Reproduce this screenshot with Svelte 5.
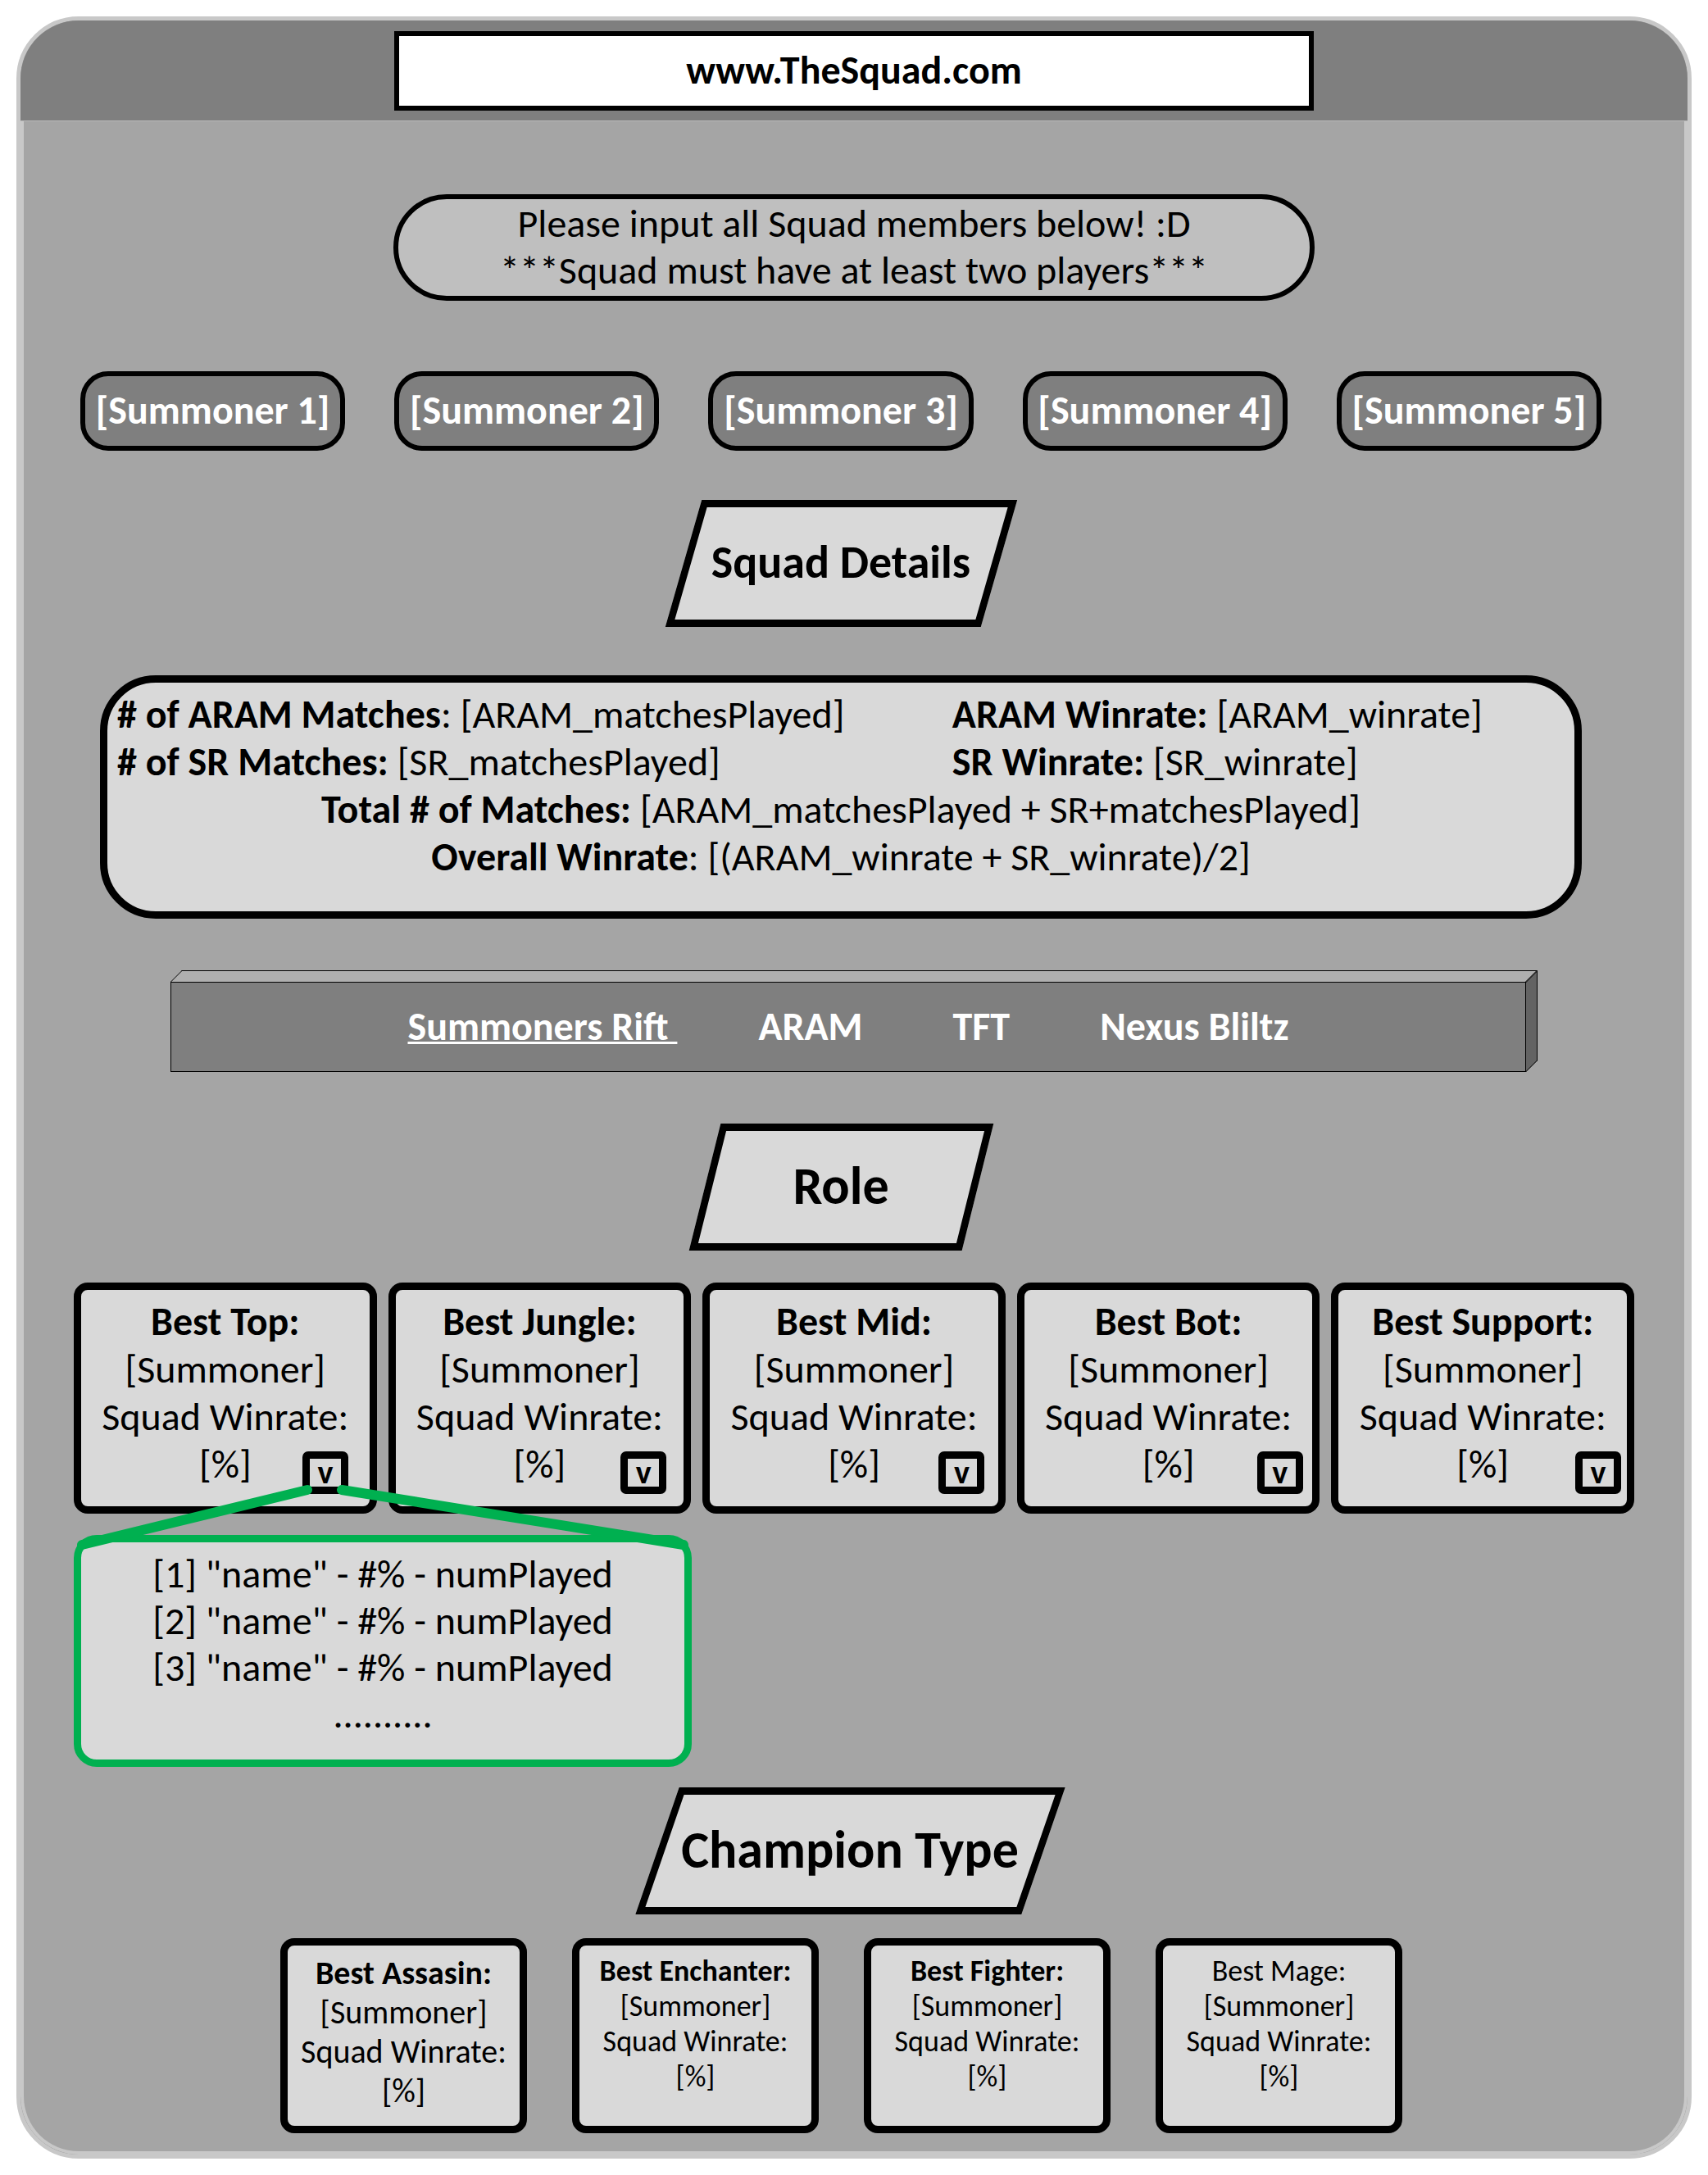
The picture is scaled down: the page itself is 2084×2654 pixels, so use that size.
<script>
  const summoners = [1, 2, 3, 4, 5];
  const modes = ['Summoners Rift\u00a0', 'ARAM', 'TFT', 'Nexus Bliltz'];
  const roles = ['Top', 'Jungle', 'Mid', 'Bot', 'Support'];
  const picks = [1, 2, 3];
  const types = [
    { name: 'Assasin', variant: 'large' },
    { name: 'Enchanter', variant: '' },
    { name: 'Fighter', variant: '' },
    { name: 'Mage', variant: 'plain' }
  ];
</script>

<div class="frame">
  <header>
    <input class="address" type="text" aria-label="Address" value="www.TheSquad.com" />
  </header>

  <main>
    <p class="notice">
      Please input all Squad members below! :D<br />***Squad must have at least two players***
    </p>

    <div class="lead">
      <form class="summoners">
        {#each summoners as n}
          <input type="text" aria-label="Summoner {n}" value="[Summoner {n}]" />
        {/each}
      </form>

      <h2 class="slab squad"><span>Squad Details</span></h2>

      <section class="details">
        <div class="pairs">
          <p><b># of ARAM Matches</b>: [ARAM_matchesPlayed]</p>
          <p><b>ARAM Winrate:</b> [ARAM_winrate]</p>
          <p><b># of SR Matches:</b> [SR_matchesPlayed]</p>
          <p><b>SR Winrate:</b> [SR_winrate]</p>
        </div>
        <p class="total"><b>Total # of Matches:</b> [ARAM_matchesPlayed + SR+matchesPlayed]</p>
        <p class="total"><b>Overall Winrate</b>: [(ARAM_winrate + SR_winrate)/2]</p>
      </section>
    </div>

    <nav class="modes">
      <div class="lid"></div>
      <div class="face">
        {#each modes as mode, i}
          <a href="#mode-{i}" class:current={i === 0}>{mode}</a>
        {/each}
      </div>
      <div class="side"></div>
    </nav>

    <div class="lead">
      <h2 class="slab role"><span>Role</span></h2>
    </div>

    <section class="roles">
      <div class="cards">
        {#each roles as role}
          <article class="card">
            <h3>Best {role}:</h3>
            <p>[Summoner]</p>
            <p>Squad Winrate:</p>
            <p>[%]</p>
          </article>
        {/each}
      </div>
      <div class="toggles">
        {#each roles as role, i}
          <button type="button" aria-label="Show best {role} list" aria-expanded={i === 0}>v</button>
        {/each}
      </div>
      <div class="dropdown">
        {#each picks as n}
          <p>[{n}] "name" - #% - numPlayed</p>
        {/each}
        <p>..........</p>
      </div>
      <svg class="callout" viewBox="0 0 754 67" preserveAspectRatio="none" aria-hidden="true">
        <path d="M285 0 L10 67 M327 0 L744 67" />
      </svg>
    </section>

    <section class="champions">
      <h2 class="slab champion"><span>Champion Type</span></h2>
      <div class="types">
        {#each types as type}
          <article class="card {type.variant}">
            <h3>Best {type.name}:</h3>
            <p>[Summoner]</p>
            <p>Squad Winrate:</p>
            <p>[%]</p>
          </article>
        {/each}
      </div>
    </section>
  </main>
</div>

<style>
  :global(body) {
    margin: 0;
    background: #fff;
  }
  .frame,
  .frame * {
    box-sizing: border-box;
  }
  .frame {
    margin: 20px;
    border: 5px solid #c8c8c8;
    border-radius: 76px;
    overflow: hidden;
    background: #a5a5a5;
    color: #000;
    font: 48px/58px Carlito, Lato, sans-serif;
  }
  p,
  h2,
  h3 {
    margin: 0;
    font-size: inherit;
  }
  input,
  button {
    font: inherit;
    margin: 0;
    min-width: 0;
  }
  header {
    display: flex;
    justify-content: center;
    padding: 13px 0 12px;
    background: #7f7f7f;
    border-bottom: 1px solid #b8b8b8;
  }
  .address {
    width: 55.2%;
    height: 97px;
    padding: 0 0 2px;
    border: 6px solid #000;
    background: #fff;
    font-weight: 700;
    text-align: center;
  }
  main {
    display: flex;
    flex-direction: column;
    padding: 89px 3% 22px;
    border: solid #c8c8c8;
    border-width: 0 4px 4px;
    border-radius: 0 0 71px 71px;
  }
  .notice {
    align-self: center;
    width: 59%;
    padding: 1px 0 3px;
    border: 6px solid #000;
    border-radius: 65px;
    background: #bfbfbf;
    line-height: 57px;
    text-align: center;
  }
  .lead {
    padding-right: 32px;
  }
  .summoners {
    display: grid;
    grid-template-columns: repeat(5, 1fr);
    gap: 60px;
    margin: 86px 8px 60px;
  }
  .summoners input {
    height: 97px;
    padding: 0 0 2px;
    border: 6px solid #000;
    border-radius: 34px;
    background: #7f7f7f;
    color: #fff;
    font-weight: 700;
    text-align: center;
  }
  .slab {
    position: relative;
    height: 155px;
    margin: 0 auto;
    padding-bottom: 4px;
    display: flex;
    align-items: center;
    justify-content: center;
    font-weight: 700;
  }
  .slab::before {
    content: '';
    position: absolute;
    inset: 0;
    border: 9px solid #000;
    background: #d9d9d9;
  }
  .slab span {
    position: relative;
  }
  .squad {
    width: 385px;
    font-size: 56px;
  }
  .squad::before {
    transform: skewX(-16deg);
  }
  .role {
    width: 333px;
    font-size: 64px;
  }
  .role::before {
    transform: skewX(-14deg);
  }
  .champion {
    width: 471px;
    font-size: 64px;
  }
  .champion::before {
    transform: skewX(-19deg);
  }
  .details {
    margin: 59px 32px 63px;
    padding: 10px 12px 37px;
    border: 9px solid #000;
    border-radius: 68px;
    background: #d9d9d9;
  }
  .pairs {
    display: grid;
    grid-template-columns: 15fr 11fr;
    white-space: nowrap;
  }
  .total {
    text-align: center;
  }
  .modes {
    display: grid;
    grid-template: 14px 110px / 1fr 14px;
    margin: 0 118px 63px;
  }
  .lid {
    grid-column: 1;
    grid-row: 1;
    border: 1px solid #000;
    border-bottom: 0;
    background: #afafaf;
    transform: skewX(-45deg);
    transform-origin: bottom;
  }
  .side {
    grid-column: 2;
    grid-row: 2;
    border: 1px solid #000;
    border-left: 0;
    background: #636363;
    transform: skewY(-45deg);
    transform-origin: left;
  }
  .face {
    grid-column: 1;
    grid-row: 2;
    display: flex;
    align-items: center;
    justify-content: center;
    gap: 110px;
    border: 1px solid #000;
    background: #7f7f7f;
    font-weight: 700;
  }
  .face a {
    color: #fff;
    text-decoration: none;
  }
  /* The underlined trailing space takes its room from the gap. */
  .face .current {
    margin-right: -11px;
    text-decoration: underline;
    text-decoration-thickness: 3px;
  }
  .roles {
    position: relative;
    margin-top: 39px;
  }
  .cards {
    display: grid;
    grid-template-columns: repeat(5, 1fr);
    gap: 14px;
  }
  .card {
    border: 9px solid #000;
    border-radius: 17px;
    background: #d9d9d9;
    text-align: center;
    white-space: nowrap;
  }
  .cards .card {
    padding: 10px 0 22px;
  }
  .toggles {
    position: absolute;
    top: 206px;
    left: 279px;
    right: 16px;
    display: flex;
    justify-content: space-between;
  }
  .toggles button {
    width: 56px;
    height: 52px;
    padding: 0;
    border: 9px solid #000;
    border-radius: 7px;
    background: #d9d9d9;
    color: #000;
    font-size: 40px;
    font-weight: 700;
    line-height: 34px;
  }
  .dropdown {
    width: 39.6%;
    margin-top: 26px;
    padding: 10px 0 27px;
    border: 9px solid #00b050;
    border-radius: 28px;
    background: #d9d9d9;
    line-height: 57px;
    text-align: center;
  }
  .callout {
    position: absolute;
    top: 253px;
    left: 0;
    width: 39.6%;
    height: 67px;
    overflow: visible;
    fill: none;
    stroke: #00b050;
    stroke-width: 12;
    stroke-linecap: round;
  }
  .champions {
    padding: 25px 10px 0 0;
  }
  .types {
    display: grid;
    grid-template-columns: repeat(4, 1fr);
    gap: 55px;
    margin: 29px 273px 0 252px;
  }
  .types .card {
    height: 238px;
    padding: 10px 0;
    font-size: 36px;
    line-height: 43px;
  }
  .types .large {
    font-size: 40px;
    line-height: 48px;
  }
  .plain h3 {
    font-weight: 400;
  }
</style>
